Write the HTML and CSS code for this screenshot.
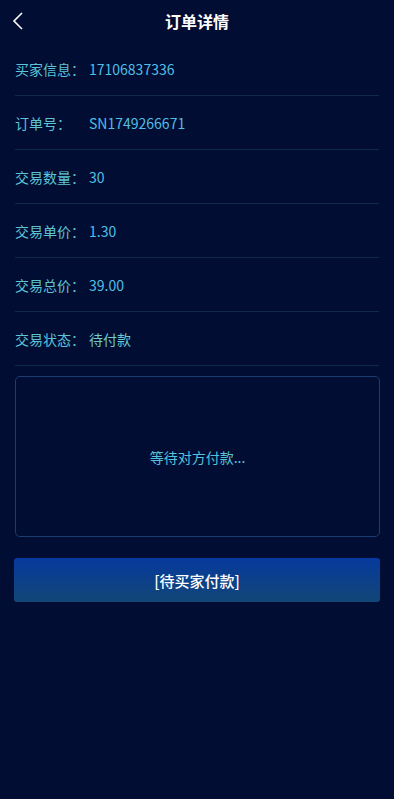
FILE: index.html
```html
<!DOCTYPE html>
<html lang="zh-CN">
<head>
  <meta charset="UTF-8" />
  <meta name="viewport" content="width=device-width, initial-scale=1.0"/>
  <title>订单详情</title>
  <link rel="stylesheet" href="styles.css">
</head>
<body>
  <header class="topbar">
    <span class="back">
      <svg width="12" height="20" viewBox="0 0 12 20"><path d="M10 2 L2 10 L10 18" fill="none" stroke="#fff" stroke-width="1.6"/></svg>
    </span>
    <h1>订单详情</h1>
  </header>
  <main class="detail">
    <div class="row"><span class="label">买家信息：</span><span class="val">17106837336</span></div>
    <div class="row"><span class="label">订单号：</span><span class="val">SN1749266671</span></div>
    <div class="row"><span class="label">交易数量：</span><span class="val">30</span></div>
    <div class="row"><span class="label">交易单价：</span><span class="val">1.30</span></div>
    <div class="row"><span class="label">交易总价：</span><span class="val">39.00</span></div>
    <div class="row"><span class="label">交易状态：</span><span class="val status">待付款</span></div>

    <div class="waitbox">等待对方付款...</div>

    <button class="btn">[待买家付款]</button>
  </main>
</body>
</html>
```

FILE: styles.css
```css
body { margin: 0; background: #020d33; font-family: "Noto Sans CJK SC", "Noto Sans", sans-serif; color: #5bc6d8; }
.topbar { height: 42px; display: flex; align-items: center; justify-content: center; position: relative; }
.topbar h1 { margin: 0; font-size: 16px; font-weight: bold; color: #fff; }
.back { position: absolute; left: 12px; top: 11px; display: flex; }
.detail { padding: 0 15px; }
.row { height: 53px; display: flex; align-items: center; border-bottom: 1px solid #0d2a4a; font-size: 14px; }
.label { width: 74px; color: #5cc4d6; }
.val { color: #4fbfe6; }
.val.status { color: #6cc9cc; }
.waitbox { margin: 10px -1px 0 0; height: 159px; border: 1px solid #1b3d72; border-radius: 5px; display: flex; align-items: center; justify-content: center; font-size: 14px; color: #56c2dc; }
.btn { display: block; width: 366px; margin: 21px 0 0 -1px; height: 44px; border: none; border-radius: 3px; background: linear-gradient(#063a9e, #124676); color: #fff; font-size: 15px; font-weight: 500; font-family: inherit; }
```
